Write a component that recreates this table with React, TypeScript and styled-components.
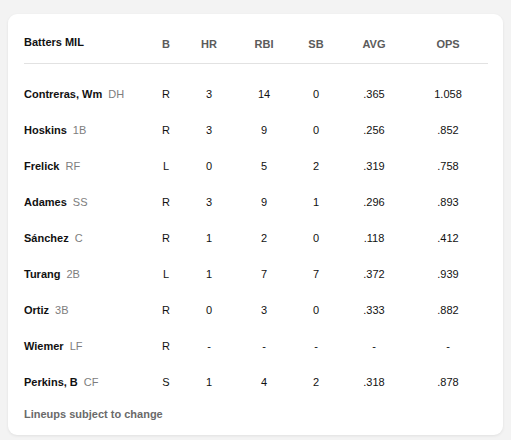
import React from "react";
import styled, { createGlobalStyle } from "styled-components";

const Global = createGlobalStyle`
  html, body { margin: 0; padding: 0; background: #f3f3f3; }
  body { font-family: "Liberation Sans", Arial, sans-serif; -webkit-font-smoothing: antialiased; }
`;

const Page = styled.div`
  padding: 14px 8px 5px 8px;
`;

const Card = styled.div`
  background: #ffffff;
  border-radius: 9px;
  box-shadow: 0 1px 3px rgba(0, 0, 0, 0.08);
  padding: 16px 15px 0 16px;
  height: 421px;
  box-sizing: border-box;
`;

const COLS = "122px 40px 46px 64px 40px 76px 72px";

const HeaderRow = styled.div`
  display: grid;
  grid-template-columns: ${COLS};
  align-items: center;
  height: 28px;
  padding-bottom: 5px;
  border-bottom: 1px solid #e2e2e2;
  margin-bottom: 12px;
`;

const Title = styled.div`
  font-size: 11px;
  font-weight: 700;
  color: #111;
  margin-bottom: 4px;
`;

const ColHead = styled.div`
  font-size: 11px;
  font-weight: 700;
  color: #5b5b5b;
  text-align: center;
`;

const Row = styled.div`
  display: grid;
  grid-template-columns: ${COLS};
  align-items: center;
  height: 36px;
`;

const Name = styled.div`
  font-size: 11px;
  font-weight: 700;
  color: #111;
  white-space: nowrap;
`;

const Pos = styled.span`
  font-weight: 400;
  color: #7d7d7d;
  margin-left: 6px;
`;

const Cell = styled.div<{ $bold?: boolean }>`
  font-size: 11px;
  font-weight: ${(p) => (p.$bold ? 700 : 400)};
  color: #111;
  text-align: center;
`;

const Footer = styled.div`
  font-size: 11px;
  font-weight: 700;
  color: #6a6a6a;
  padding-top: 8px;
`;

type Batter = {
  name: string;
  pos: string;
  b: string;
  hr: string;
  rbi: string;
  sb: string;
  avg: string;
  ops: string;
};

const batters: Batter[] = [
  { name: "Contreras, Wm", pos: "DH", b: "R", hr: "3", rbi: "14", sb: "0", avg: ".365", ops: "1.058" },
  { name: "Hoskins", pos: "1B", b: "R", hr: "3", rbi: "9", sb: "0", avg: ".256", ops: ".852" },
  { name: "Frelick", pos: "RF", b: "L", hr: "0", rbi: "5", sb: "2", avg: ".319", ops: ".758" },
  { name: "Adames", pos: "SS", b: "R", hr: "3", rbi: "9", sb: "1", avg: ".296", ops: ".893" },
  { name: "Sánchez", pos: "C", b: "R", hr: "1", rbi: "2", sb: "0", avg: ".118", ops: ".412" },
  { name: "Turang", pos: "2B", b: "L", hr: "1", rbi: "7", sb: "7", avg: ".372", ops: ".939" },
  { name: "Ortiz", pos: "3B", b: "R", hr: "0", rbi: "3", sb: "0", avg: ".333", ops: ".882" },
  { name: "Wiemer", pos: "LF", b: "R", hr: "-", rbi: "-", sb: "-", avg: "-", ops: "-" },
  { name: "Perkins, B", pos: "CF", b: "S", hr: "1", rbi: "4", sb: "2", avg: ".318", ops: ".878" },
];

export default function App() {
  return (
    <>
      <Global />
      <Page>
        <Card>
          <HeaderRow>
            <Title>Batters MIL</Title>
            <ColHead>B</ColHead>
            <ColHead>HR</ColHead>
            <ColHead>RBI</ColHead>
            <ColHead>SB</ColHead>
            <ColHead>AVG</ColHead>
            <ColHead>OPS</ColHead>
          </HeaderRow>
          {batters.map((r) => (
            <Row key={r.name}>
              <Name>
                {r.name}
                <Pos>{r.pos}</Pos>
              </Name>
              <Cell>{r.b}</Cell>
              <Cell>{r.hr}</Cell>
              <Cell>{r.rbi}</Cell>
              <Cell>{r.sb}</Cell>
              <Cell>{r.avg}</Cell>
              <Cell>{r.ops}</Cell>
            </Row>
          ))}
          <Footer>Lineups subject to change</Footer>
        </Card>
      </Page>
    </>
  );
}
